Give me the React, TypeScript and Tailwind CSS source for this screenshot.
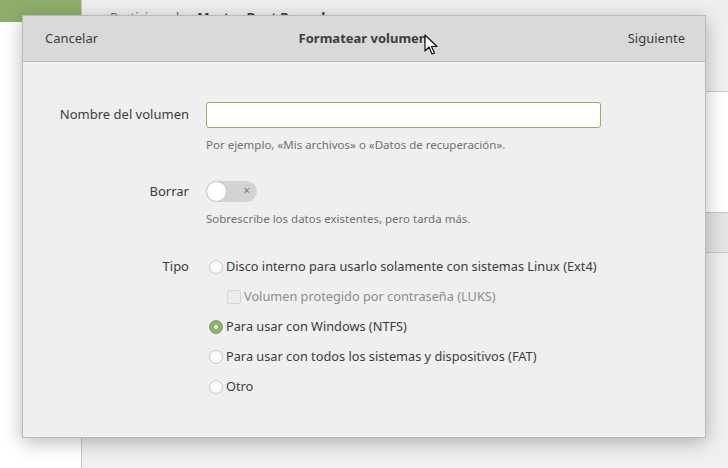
import React from "react";

function Radio({ checked }: { checked?: boolean }) {
  return checked ? (
    <span className="flex h-[14px] w-[14px] items-center justify-center rounded-full border border-[#7f9f5d] bg-[#8fb26c]">
      <span className="h-[4px] w-[4px] rounded-full bg-white" />
    </span>
  ) : (
    <span className="h-[14px] w-[14px] rounded-full border border-[#c4c4c4] bg-white" />
  );
}

export default function App() {
  const font = { fontFamily: '"Noto Sans", "Open Sans", sans-serif' };
  return (
    <div className="relative h-[468px] w-[728px] overflow-hidden bg-white" style={font}>
      {/* Background window */}
      <div className="flex h-full w-full">
        <div className="flex w-[82px] flex-col border-r border-[#c9c9c9] bg-white">
          <div className="h-[22px] bg-[#8fae6b]" />
        </div>
        <div className="flex flex-1 flex-col">
          <div className="flex h-[92px] gap-[10px] border-b border-[#c6c6c6] bg-[#efefef] pl-[28px] pt-[9px] text-[13px] leading-[16px]">
            <span className="text-[#6a6a6a]">Particionado</span>
            <span className="font-bold text-[#3c3c3c]">Master Boot Record</span>
          </div>
          <div className="h-[120px] bg-white" />
          <div className="h-[41px] border-y border-[#c6c6c6] bg-[#e4e4e4]" />
          <div className="flex-1 bg-[#f0f0f0]" />
        </div>
      </div>

      {/* Dialog */}
      <div className="absolute left-[22px] top-[15px] flex h-[423px] w-[684px] flex-col border border-[#b9b9b9] bg-[#efefef] shadow-[0_4px_18px_rgba(0,0,0,0.28)]">
        <div className="flex h-[46px] items-center justify-between border-b border-[#bdbdbd] bg-[#d9d9d9] pl-[22px] pr-[20px] text-[13px] text-[#3d3d3d]">
          <span>Cancelar</span>
          <span className="font-bold">Formatear volumen</span>
          <span>Siguiente</span>
        </div>

        <div className="grid grid-cols-[166px_1fr] gap-x-[17px] pt-[40px] text-[12.75px] text-[#3c3c3c]">
          {/* Nombre */}
          <div className="flex h-[26px] items-center justify-end text-[13px]">Nombre del volumen</div>
          <div>
            <div className="h-[26px] w-[395px] rounded-[3px] border border-[#8db06a] bg-white" />
            <div className="mt-[9px] text-[11.5px] leading-[16px] text-[#707070]">
              Por ejemplo, «Mis archivos» o «Datos de recuperación».
            </div>
          </div>

          {/* Borrar */}
          <div className="mt-[28px] flex h-[21px] items-center justify-end text-[13px]">Borrar</div>
          <div className="mt-[28px]">
            <div className="relative flex h-[21px] w-[51px] items-center rounded-full bg-[#d3d3d3]">
              <span className="absolute left-0 top-0 h-[21px] w-[21px] rounded-full border border-[#c2c2c2] bg-white" />
              <span className="absolute right-[7px] top-[1px] text-[12px] leading-[18px] text-[#7a7a7a]">×</span>
            </div>
            <div className="mt-[9px] text-[11.5px] leading-[16px] text-[#707070]">
              Sobrescribe los datos existentes, pero tarda más.
            </div>
          </div>

          {/* Tipo */}
          <div className="mt-[30px] flex h-[20px] items-center justify-end text-[13px]">Tipo</div>
          <div className="mt-[30px] flex flex-col gap-[10px]">
            <div className="flex h-[20px] items-center gap-[3px] pl-[3px]">
              <Radio />
              <span>Disco interno para usarlo solamente con sistemas Linux (Ext4)</span>
            </div>
            <div className="flex h-[20px] items-center gap-[3px] pl-[21px] text-[#8c8c8c]">
              <span className="h-[14px] w-[14px] rounded-[2px] border border-[#d6d6d6] bg-[#ececec]" />
              <span>Volumen protegido por contraseña (LUKS)</span>
            </div>
            <div className="flex h-[20px] items-center gap-[3px] pl-[3px]">
              <Radio checked />
              <span>Para usar con Windows (NTFS)</span>
            </div>
            <div className="flex h-[20px] items-center gap-[3px] pl-[3px]">
              <Radio />
              <span>Para usar con todos los sistemas y dispositivos (FAT)</span>
            </div>
            <div className="flex h-[20px] items-center gap-[3px] pl-[3px]">
              <Radio />
              <span>Otro</span>
            </div>
          </div>
        </div>
      </div>

      {/* Mouse cursor */}
      <svg className="absolute left-[424px] top-[34px]" width="14" height="22" viewBox="0 0 14 22">
        <path d="M1 1 L1 17 L5 13 L8 20 L10.5 19 L7.5 12.5 L13 12.5 Z" fill="#fff" stroke="#111" strokeWidth="1.2" strokeLinejoin="round" />
      </svg>
    </div>
  );
}
